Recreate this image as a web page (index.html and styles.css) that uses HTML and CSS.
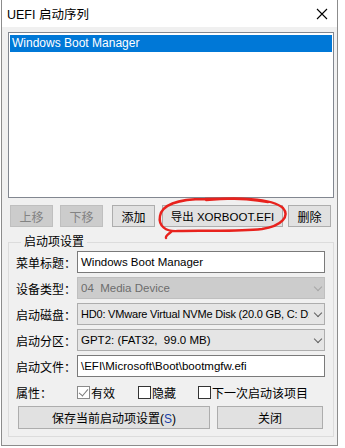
FILE: index.html
```html
<!DOCTYPE html>
<html>
<head>
    <meta charset="utf-8" />
    <title>UEFI 启动序列</title>
    <link rel="stylesheet" href="styles.css">
</head>
<body>
    <div class="window">
        <div class="titlebar">
            <span class="title">UEFI 启动序列</span>
            <svg class="close" width="12" height="12" viewBox="0 0 12 12"><path d="M1 1L11 11M11 1L1 11" stroke="#000" stroke-width="1.1"/></svg>
        </div>
        <div class="client">
            <div class="listbox">
                <div class="item selected">Windows Boot Manager</div>
            </div>

            <div class="btnrow">
                <button class="btn disabled b-up">上移</button>
                <button class="btn disabled b-down">下移</button>
                <button class="btn b-add">添加</button>
                <button class="btn b-export">导出 XORBOOT.EFI</button>
                <button class="btn b-del">删除</button>
            </div>

            <fieldset class="group">
                <legend>启动项设置</legend>
                <div class="row">
                    <label>菜单标题：</label>
                    <div class="edit">Windows Boot Manager</div>
                </div>
                <div class="row">
                    <label>设备类型：</label>
                    <div class="combo disabled"><span>04 &nbsp;Media Device</span><i class="arrow"></i></div>
                </div>
                <div class="row">
                    <label>启动磁盘：</label>
                    <div class="combo"><span class="long">HD0: VMware Virtual NVMe Disk (20.0 GB, C: D:</span><i class="arrow"></i></div>
                </div>
                <div class="row">
                    <label>启动分区：</label>
                    <div class="combo"><span>GPT2: (FAT32, &nbsp;99.0 MB)</span><i class="arrow"></i></div>
                </div>
                <div class="row">
                    <label>启动文件：</label>
                    <div class="edit">\EFI\Microsoft\Boot\bootmgfw.efi</div>
                </div>
                <div class="row checks">
                    <label>属性：</label>
                    <span class="check c1"><i class="box checked"></i>有效</span>
                    <span class="check c2"><i class="box"></i>隐藏</span>
                    <span class="check"><i class="box"></i>下一次启动该项目</span>
                </div>
                <div class="bottom">
                    <button class="btn b-save">保存当前启动项设置(<span class="key">S</span>)</button>
                    <button class="btn b-close">关闭</button>
                </div>
            </fieldset>
        </div>
    </div>
    <svg class="mark" width="345" height="448" viewBox="0 0 345 448">
        <path d="M206 200 C235 197, 272 198, 283 208 C290 216, 282 226, 262 229 C235 232, 200 230, 178 231 C166 232, 158 226, 160 216 C162 205, 178 199, 205 199 C230 198, 256 200, 268 202 M172 231 C169 234, 165 236, 166 238" fill="none" stroke="#e8221d" stroke-width="2.4" stroke-linecap="round"/>
    </svg>
</body>
</html>
```

FILE: styles.css
```css
*{
    margin: 0;
    padding: 0;
    box-sizing: border-box;
}
body{
    background: #fff;
    font-family: "Liberation Sans", "Noto Sans CJK SC", sans-serif;
    font-size: 11.5px;
    color: #000;
    width: 345px;
    height: 448px;
    overflow: hidden;
}
.window{
    margin-left: 1px;
    width: 337px;
    height: 446px;
    border: 1px solid #8c8c8c;
    border-top: none;
    display: flex;
    flex-direction: column;
}
.titlebar{
    height: 27px;
    background: #fff;
    display: flex;
    align-items: center;
    justify-content: space-between;
    padding: 0 9px 0 5px;
}
.title{
    font-size: 12.5px;
}
.close{
    display: block;
}
.client{
    flex: 1;
    background: #f0f0f0;
    padding: 5px 3px 0 6px;
}
.listbox{
    height: 166px;
    border: 1px solid #828790;
    background: #fff;
    padding: 2px 1px;
}
.item{
    height: 17px;
    line-height: 16px;
    padding-left: 2px;
    font-size: 12px;
}
.selected{
    background: #0078d7;
    color: #fff;
}
.btnrow{
    display: flex;
    margin-top: 7px;
    height: 22px;
    padding-left: 2px;
}
.btn{
    height: 22px;
    background: #e1e1e1;
    border: 1px solid #adadad;
    font-family: "Liberation Sans", "Noto Sans CJK SC", sans-serif;
    font-size: 12px;
    color: #000;
    text-align: center;
    white-space: nowrap;
}
.btn.disabled{
    background: #cccccc;
    border-color: #bfbfbf;
    color: #838383;
}
.b-up{ width: 43px; }
.b-down{ width: 43px; margin-left: 7px; }
.b-add{ width: 43px; margin-left: 9px; }
.b-export{ width: 121px; margin-left: 7px; font-size: 11.5px; }
.b-del{ width: 43px; margin-left: 5px; }
.group{
    margin-top: 9px;
    width: 326px;
    height: 201px;
    border: 1px solid #dcdcdc;
    padding: 0 8px 0 7px;
}
.group legend{
    margin-left: 5px;
    padding: 0 3px;
    font-size: 12px;
    line-height: 12px;
    height: 12px;
}
.row{
    display: flex;
    align-items: center;
    height: 22px;
    margin-top: 4px;
}
.row:first-of-type{
    margin-top: 3px;
}
.row label{
    width: 61px;
    font-size: 12px;
    flex: none;
    white-space: nowrap;
}
.edit{
    width: 248px;
    height: 22px;
    border: 1px solid #7a7a7a;
    background: #fff;
    line-height: 20px;
    padding-left: 3px;
    white-space: nowrap;
    overflow: hidden;
}
.combo{
    width: 248px;
    height: 22px;
    border: 1px solid #adadad;
    background: #e5e5e5;
    display: flex;
    align-items: center;
    padding-left: 3px;
    white-space: nowrap;
    overflow: hidden;
}
.combo span{
    width: 228px;
    flex: none;
    overflow: hidden;
}
.combo .long{
    font-size: 11px;
    letter-spacing: -0.2px;
}
.combo.disabled{
    background: #cccccc;
    border-color: #bfbfbf;
    color: #6d6d6d;
}
.arrow{
    display: block;
    flex: none;
    width: 6px;
    height: 6px;
    border-right: 1px solid #606060;
    border-bottom: 1px solid #606060;
    transform: rotate(45deg);
    margin: -3px 0 0 6px;
}
.combo.disabled .arrow{
    border-color: #a6a6a6;
}
.checks{
    height: 20px;
    margin-top: 5px;
}
.check{
    display: flex;
    align-items: center;
    font-size: 12px;
}
.c1{ width: 61px; }
.c2{ width: 60px; }
.box{
    display: block;
    width: 13px;
    height: 13px;
    border: 1px solid #333;
    background: #fff;
    margin-right: 1px;
    position: relative;
}
.box.checked{
    border-color: #8a8a8a;
}
.box.checked::after{
    content: "";
    position: absolute;
    left: 3px;
    top: 0px;
    width: 4px;
    height: 8px;
    border-right: 1.5px solid #7a7a7a;
    border-bottom: 1.5px solid #7a7a7a;
    transform: rotate(40deg);
}
.bottom{
    display: flex;
    margin-top: 4px;
    padding-left: 2px;
}
.b-save{
    width: 192px;
    height: 23px;
}
.b-close{
    width: 106px;
    height: 23px;
    margin-left: 7px;
}
.key{
    color: #1a3fa8;
}
.mark{
    position: absolute;
    left: 0;
    top: 0;
    pointer-events: none;
}
```
